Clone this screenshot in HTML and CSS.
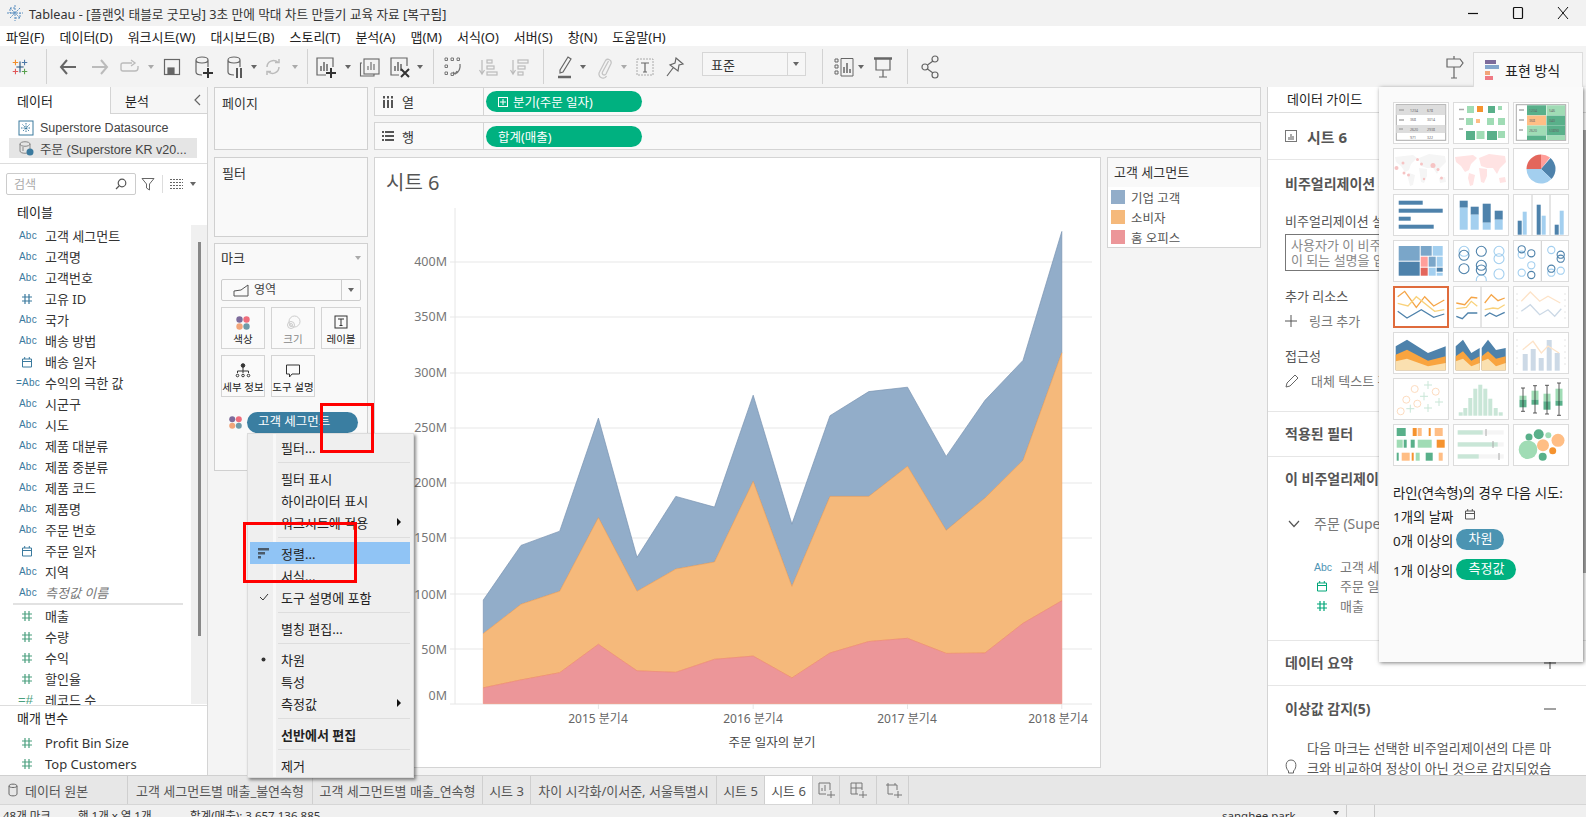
FILE: index.html
```html
<!DOCTYPE html>
<html lang="ko">
<head>
<meta charset="utf-8">
<title>Tableau</title>
<link rel="stylesheet" href="styles.css">
</head>
<body>
<svg class="defs" width="0" height="0">
  <defs>
    <symbol id="hash" viewBox="0 0 12 12"><path d="M4 1V11M8 1V11M1 4H11M1 8H11" fill="none" stroke="currentColor" stroke-width="1.2"/></symbol>
    <symbol id="cal" viewBox="0 0 12 12"><path d="M1.5 3H10.5V11H1.5ZM1.5 5.5H10.5M3.7 1V3M8.3 1V3" fill="none" stroke="currentColor" stroke-width="1"/></symbol>
    <symbol id="dots" viewBox="0 0 16 16"><circle cx="4.5" cy="4.5" r="3.2" fill="#7d6b9b"/><circle cx="11.5" cy="4.5" r="3.2" fill="#ef6d7c"/><circle cx="4.5" cy="11.5" r="3.2" fill="#f2a57a"/><circle cx="11.5" cy="11.5" r="3.2" fill="#6f9aa8"/></symbol>
    <symbol id="world" viewBox="0 0 56 42"><path d="M2 9L20 7L24 10L18 16L16 22L12 24L8 18L3 14ZM16 25L22 27L20 37L17 38L15 30ZM26 10L36 6L52 8L53 14L47 20L44 26L40 20L34 20L28 18ZM26 20L34 21L34 28L31 35L28 34L27 27ZM46 30L52 29L53 34L47 35Z"/></symbol>
  </defs>
</svg>

<header class="titlebar">
  <svg class="title-logo" width="16" height="16" viewBox="0 0 16 16"><path d="M8 0V16M0 8H16M3 3L13 13M13 3L3 13M8 3H3V8H8M8 13H13V8" stroke="#5b8fc0" stroke-width="1" stroke-dasharray="2 1" fill="none"/></svg>
  <span class="title-text">Tableau - [플랜잇 태블로 굿모닝] 3초 만에 막대 차트 만들기 교육 자료 [복구됨]</span>
  <span class="win-controls">
    <svg width="12" height="12" viewBox="0 0 12 12"><path d="M1 6.5H11" stroke="#111" stroke-width="1.2"/></svg>
    <svg width="12" height="14" viewBox="0 0 12 14"><rect x="1.5" y="1.5" width="9" height="11" rx="1" fill="none" stroke="#111" stroke-width="1.2"/></svg>
    <svg width="12" height="14" viewBox="0 0 12 14"><path d="M1 1L11 13M11 1L1 13" stroke="#111" stroke-width="1"/></svg>
  </span>
</header>

<nav class="menubar">
  <span>파일(F)</span><span>데이터(D)</span><span>워크시트(W)</span><span>대시보드(B)</span><span>스토리(T)</span><span>분석(A)</span><span>맵(M)</span><span>서식(O)</span><span>서버(S)</span><span>창(N)</span><span>도움말(H)</span>
</nav>

<div class="toolbar">
  <span class="tb w40"><svg width="20" height="20" viewBox="0 0 22 22" fill="none" stroke-width="1.2"><path d="M11 5V17M7 11H15" stroke="#1f4e79"/><path d="M6 3V9M3 6H9" stroke="#f28e2b"/><path d="M16 3V9M13 6H19" stroke="#4e79a7"/><path d="M6 13V19M3 16H9" stroke="#e15759"/><path d="M16 13V19M13 16H19" stroke="#59a14f"/></svg></span>
  <span class="tb w12"><i class="sep"></i></span>
  <span class="tb w32"><svg width="20" height="20" viewBox="0 0 20 20" fill="none" stroke="#666" stroke-width="2"><path d="M18 10H3M9 3L3 10L9 17"/></svg></span>
  <span class="tb w32"><svg width="20" height="20" viewBox="0 0 20 20" fill="none" stroke="#bbb" stroke-width="2"><path d="M2 10H17M11 3L17 10L11 17"/></svg></span>
  <span class="tb w28"><svg width="22" height="20" viewBox="0 0 22 20" fill="none" stroke="#bbb" stroke-width="1.4"><path d="M13 6H4Q2 6 2 8V12Q2 14 4 14H16Q19 14 19 11V9"/><path d="M12 3L16 6L12 9"/></svg></span>
  <span class="tb w14"><i class="dd dd-l"></i></span>
  <span class="tb w28"><svg width="18" height="20" viewBox="0 0 18 20" fill="none" stroke="#666" stroke-width="1.2"><rect x="1.5" y="2.5" width="15" height="15"/><rect x="5" y="11" width="6" height="6" fill="#666"/></svg></span>
  <span class="tb w36"><svg width="22" height="24" viewBox="0 0 22 24" fill="none" stroke="#666" stroke-width="1.2"><path d="M3 5C3 1 15 1 15 5V12M3 5C3 9 15 9 15 5M3 5V17C3 19 6 20 9 20"/><path d="M15 13V23M10 18H20" stroke="#333" stroke-width="2"/></svg></span>
  <span class="tb w26"><svg width="20" height="24" viewBox="0 0 20 24" fill="none" stroke="#666" stroke-width="1.2"><path d="M3 5C3 1 15 1 15 5V12M3 5C3 9 15 9 15 5M3 5V17C3 19 6 20 9 20"/><path d="M12 13V23M16 13V23" stroke="#333" stroke-width="1.6"/></svg></span>
  <span class="tb w12"><i class="dd"></i></span>
  <span class="tb w26"><svg width="20" height="20" viewBox="0 0 20 20" fill="none" stroke="#bbb" stroke-width="1.5"><path d="M4 10A6.5 6.5 0 0 1 15 5.5M16 10A6.5 6.5 0 0 1 5 14.5"/><path d="M12 5.5H16V2M8 14.5H4V18"/></svg></span>
  <span class="tb w18"><i class="dd dd-l"></i></span>
  <span class="tb w6"><i class="sep"></i></span>
  <span class="tb w32"><svg width="22" height="24" viewBox="0 0 22 24" fill="none" stroke="#666" stroke-width="1.2"><path d="M11 20H2V3H18V12"/><path d="M6 16V11M9 16V7M12 16V9" stroke-width="1.5"/><path d="M16 13V23M11 18H21" stroke="#333" stroke-width="2"/></svg></span>
  <span class="tb w12"><i class="dd"></i></span>
  <span class="tb w32"><svg width="22" height="22" viewBox="0 0 22 22" fill="none" stroke="#666" stroke-width="1.1"><path d="M3 7H1.5V20H15V18"/><rect x="5" y="3" width="15" height="15"/><path d="M9 14V10M12 14V6M15 14V8"/></svg></span>
  <span class="tb w28"><svg width="22" height="24" viewBox="0 0 22 24" fill="none" stroke="#666" stroke-width="1.2"><path d="M10 20H2V3H18V11"/><path d="M6 16V11M9 16V7M12 16V9" stroke-width="1.5"/><path d="M12 14L20 22M20 14L12 22" stroke="#333" stroke-width="2"/></svg></span>
  <span class="tb w12"><i class="dd"></i></span>
  <span class="tb w14"><i class="sep"></i></span>
  <span class="tb w26"><svg width="20" height="22" viewBox="0 0 20 22" fill="none" stroke="#777" stroke-width="1"><path d="M2 2h2.500v2.500h-2.500zM8 2h2.500v2.500h-2.500zM14 2h2.500v2.500h-2.500zM2 9h2.500v2.500h-2.500zM2 16h2.500v2.500h-2.500zM8 17h2.500v2.500h-2.500z"/><path d="M17 8Q18 15 12 18M10 16L12 18L14 15" stroke-width="1.3"/></svg></span>
  <span class="tb w44"><svg width="20" height="20" viewBox="0 0 20 20" fill="none" stroke="#bbb" stroke-width="1.2"><path d="M4 3V17M1.500 13L4 17L6.500 13"/><rect x="9" y="3" width="5" height="3"/><rect x="9" y="9" width="7" height="3"/><rect x="9" y="15" width="10" height="3"/></svg></span>
  <span class="tb w18"><svg width="20" height="20" viewBox="0 0 20 20" fill="none" stroke="#bbb" stroke-width="1.2"><path d="M4 3V17M1.500 13L4 17L6.500 13"/><rect x="9" y="3" width="10" height="3"/><rect x="9" y="9" width="7" height="3"/><rect x="9" y="15" width="5" height="3"/></svg></span>
  <span class="tb w30"><i class="sep"></i></span>
  <span class="tb w14"><svg width="18" height="24" viewBox="0 0 18 24" fill="none" stroke="#666" stroke-width="1.2"><path d="M4 15L12 2L15 4L7 17L4 18Z"/><path d="M2 22H15" stroke="#666" stroke-width="2.500"/></svg></span>
  <span class="tb w22"><i class="dd"></i></span>
  <span class="tb w22"><svg width="16" height="24" viewBox="0 0 16 24" fill="none" stroke="#c4c4c4" stroke-width="1.300"><path d="M11.500 6L5.500 17A2 2 0 0 0 9 19L14 8.500A3.200 3.200 0 0 0 8.500 5.500L2.500 17A4 4 0 0 0 9.500 21"/></svg></span>
  <span class="tb w16"><i class="dd dd-l"></i></span>
  <span class="tb w26"><svg width="18" height="18" viewBox="0 0 18 18" fill="none"><rect x="1" y="1" width="16" height="16" stroke="#aaa" stroke-dasharray="2 1"/><path d="M5 5H13M9 5V14M7 14H11" stroke="#666" stroke-width="1.200"/></svg></span>
  <span class="tb w34"><svg width="20" height="22" viewBox="0 0 20 22" fill="none" stroke="#666" stroke-width="1.2"><path d="M11 2L18 8L14 9L13 15L5 9L10 7ZM8 12L2 20"/></svg></span>
  <span class="tb w10"></span>
  <span class="combo"><span>표준</span><i class="combo-sep"></i><i class="dd combo-dd"></i></span>
  <span class="tb w32"><i class="sep"></i></span>
  <span class="tb w12"><svg class="over" width="20" height="22" viewBox="0 0 20 22" fill="none" stroke="#666" stroke-width="1"><path d="M1 3h3v3h-3zM1 9h3v3h-3zM1 15h3v3h-3z"/><path d="M7 2.500H19V20H7Z"/><path d="M10 17V11M13 17V7M16 17V13" stroke-width="1.500"/></svg></span>
  <span class="tb w22 dd-box"><i class="dd"></i></span>
  <span class="tb w22"><svg width="20" height="24" viewBox="0 0 20 24" fill="none" stroke="#666" stroke-width="1.2"><path d="M1 3.500H19" stroke-width="2.500"/><path d="M3 4V15H17V4M10 15V22M6 22H14"/></svg></span>
  <span class="tb w26"><i class="sep"></i></span>
  <span class="tb w20"><svg width="18" height="24" viewBox="0 0 18 24" fill="none" stroke="#666" stroke-width="1.2"><circle cx="14" cy="4" r="3"/><circle cx="4" cy="12" r="3"/><circle cx="14" cy="20" r="3"/><path d="M6.500 10L12 6M6.500 14L12 18"/></svg></span>
  <span class="tb-fill"></span>
  <span class="tb w20"><svg width="20" height="26" viewBox="0 0 20 26" fill="none" stroke="#666" stroke-width="1.2"><path d="M2 5H15L18 9L15 13H2ZM9 2V5M9 13V24M6 24H12"/></svg></span>
  <span class="tb w8"></span>
  <span class="showme-tab">
    <svg width="14" height="24" viewBox="0 0 14 24"><rect x="0" y="2" width="11" height="4" fill="#7d6b9b"/><rect x="0" y="7" width="14" height="4" fill="#84a6cc"/><rect x="0" y="13" width="5" height="4" fill="#f2a57a"/><rect x="0" y="18" width="8" height="4" fill="#ef7a85"/></svg>
    <span>표현 방식</span>
  </span>
</div>

<main class="main">
  <aside class="left">
    <div class="left-tabs">
      <span class="ltab on">데이터</span>
      <span class="ltab off">분석<svg class="collapse" width="8" height="12" viewBox="0 0 8 12"><path d="M7 1L2 6L7 11" fill="none" stroke="#666" stroke-width="1.200"/></svg></span>
    </div>
    <div class="sources">
      <div class="src"><svg width="16" height="16" viewBox="0 0 16 16" fill="none" stroke="#3b7a9e"><rect x="1" y="1" width="14" height="14"/><path d="M8 3V13M3 8H13M4.500 4.500L11.500 11.500M11.500 4.500L4.500 11.500" stroke-dasharray="1.500 1"/></svg><span>Superstore Datasource</span></div>
      <div class="src sel"><svg width="16" height="16" viewBox="0 0 16 16" fill="none" stroke="#888"><path d="M2 4C2 1 12 1 12 4V11C12 14 2 14 2 11ZM2 4C2 7 12 7 12 4M5 7V11"/><circle cx="12" cy="12" r="3.500" fill="#3b7a9e" stroke="none"/></svg><span>주문 (Superstore KR v20...</span></div>
    </div>
    <div class="searchrow">
      <span class="search"><span>검색</span><svg width="12" height="12" viewBox="0 0 12 12" fill="none" stroke="#555" stroke-width="1.200"><circle cx="7" cy="5" r="3.800"/><path d="M4 8L1 11"/></svg></span>
      <svg class="s-filter" width="14" height="14" viewBox="0 0 14 14" fill="none" stroke="#666"><path d="M1 1.500H13L8.500 7V13L5.500 11V7Z"/></svg>
      <i class="s-sep"></i>
      <svg width="13" height="12" viewBox="0 0 13 12" stroke="#666"><path d="M0 1.500H13M0 4.500H13M0 7.500H13M0 10.500H13" stroke-dasharray="2 1"/></svg>
      <i class="dd s-dd"></i>
    </div>
    <div class="group-title">테이블</div>
    <div class="fields">
      <div class="track"><i class="thumbbar"></i></div>
      <div class="f"><b>Abc</b><span>고객 세그먼트</span></div>
      <div class="f"><b>Abc</b><span>고객명</span></div>
      <div class="f"><b>Abc</b><span>고객번호</span></div>
      <div class="f"><svg class="blue" width="12" height="12"><use href="#hash"/></svg><span>고유 ID</span></div>
      <div class="f"><b>Abc</b><span>국가</span></div>
      <div class="f"><b>Abc</b><span>배송 방법</span></div>
      <div class="f"><svg class="blue" width="12" height="12"><use href="#cal"/></svg><span>배송 일자</span></div>
      <div class="f"><b class="calc">=Abc</b><span>수익의 극한 값</span></div>
      <div class="f"><b>Abc</b><span>시군구</span></div>
      <div class="f"><b>Abc</b><span>시도</span></div>
      <div class="f"><b>Abc</b><span>제품 대분류</span></div>
      <div class="f"><b>Abc</b><span>제품 중분류</span></div>
      <div class="f"><b>Abc</b><span>제품 코드</span></div>
      <div class="f"><b>Abc</b><span>제품명</span></div>
      <div class="f"><b>Abc</b><span>주문 번호</span></div>
      <div class="f"><svg class="blue" width="12" height="12"><use href="#cal"/></svg><span>주문 일자</span></div>
      <div class="f"><b>Abc</b><span>지역</span></div>
      <div class="f"><b>Abc</b><em>측정값 이름</em></div>
      <div class="f-div"></div>
      <div class="f"><svg class="green" width="12" height="12"><use href="#hash"/></svg><span>매출</span></div>
      <div class="f"><svg class="green" width="12" height="12"><use href="#hash"/></svg><span>수량</span></div>
      <div class="f"><svg class="green" width="12" height="12"><use href="#hash"/></svg><span>수익</span></div>
      <div class="f"><svg class="green" width="12" height="12"><use href="#hash"/></svg><span>할인율</span></div>
      <div class="f"><b class="calc green-t">=#</b><span>레코드 수</span></div>
    </div>
    <div class="params">
      <div class="group-title param-title">매개 변수</div>
      <div class="f"><svg class="green" width="12" height="12"><use href="#hash"/></svg><span>Profit Bin Size</span></div>
      <div class="f"><svg class="green" width="12" height="12"><use href="#hash"/></svg><span>Top Customers</span></div>
    </div>
  </aside>

  <section class="cards">
    <div class="card page-card">페이지</div>
    <div class="card filter-card">필터</div>
    <div class="card marks">
      <div class="marks-head"><span>마크</span><i class="dd dd-l"></i></div>
      <div class="mark-combo">
        <svg width="18" height="14" viewBox="0 0 18 14" fill="none" stroke="#555"><path d="M1 13V8L8 7L15 2V13Z"/></svg>
        <span>영역</span><i class="mc-sep"></i><i class="dd"></i>
      </div>
      <div class="mark-btns">
        <div class="mb"><svg width="16" height="16"><use href="#dots"/></svg><span>색상</span></div>
        <div class="mb dis"><svg width="16" height="16" viewBox="0 0 16 16" fill="none" stroke="#ccc"><circle cx="9.500" cy="6.500" r="5.500"/><circle cx="6" cy="10" r="3.500"/><circle cx="6" cy="10" r="1.500"/></svg><span>크기</span></div>
        <div class="mb"><svg width="14" height="14" viewBox="0 0 14 14" fill="none" stroke="#333"><rect x="1" y="1" width="12" height="12"/><path d="M4 4H10M7 4V10.500M5.500 10.500H8.500"/></svg><span>레이블</span></div>
        <div class="mb"><svg width="16" height="16" viewBox="0 0 16 16" fill="none" stroke="#333"><circle cx="8" cy="2.500" r="1.800" fill="#333"/><path d="M8 4V9M2.500 8V10M2.500 8H13.500V10M8 9V10"/><circle cx="2.500" cy="12.500" r="1.300"/><circle cx="8" cy="12.500" r="1.300"/><circle cx="13.500" cy="12.500" r="1.300"/></svg><span>세부 정보</span></div>
        <div class="mb"><svg width="16" height="16" viewBox="0 0 16 16" fill="none" stroke="#333"><path d="M1.500 2H14.500V11H7L4.500 14V11H1.500Z"/></svg><span>도구 설명</span></div>
      </div>
      <div class="mark-pill-row">
        <svg width="15" height="15"><use href="#dots"/></svg>
        <span class="mark-pill">고객 세그먼트</span>
      </div>
    </div>
  </section>

  <section class="work">
    <div class="shelf">
      <div class="shelf-label"><svg width="12" height="12" viewBox="0 0 12 12" stroke="#555" stroke-width="2"><path d="M2 4V12M6 4V12M10 4V12M2 0V2.500M6 0V2.500M10 0V2.500"/></svg><span>열</span></div>
      <span class="pill"><svg width="10" height="10" viewBox="0 0 10 10" fill="none" stroke="#fff"><rect x=".5" y=".5" width="9" height="9"/><path d="M5 2V8M2 5H8"/></svg>분기(주문 일자)</span>
    </div>
    <div class="shelf">
      <div class="shelf-label"><svg width="12" height="12" viewBox="0 0 12 12" stroke="#555" stroke-width="2"><path d="M0 2H2M3 2H12M0 6H2M3 6H12M0 10H2M3 10H12"/></svg><span>행</span></div>
      <span class="pill">합계(매출)</span>
    </div>
    <div class="canvas-row">
      <div class="viz">
        <div class="viz-title">시트 6</div>
        <svg class="chart" width="725" height="570" viewBox="375 197 725 570">
          <path class="grid" d="M450 262H1092M450 317H1092M450 373H1092M450 428H1092M450 483H1092M450 538H1092M450 594H1092M450 649H1092"/>
          <path class="axis" d="M455 208V704M450 704H1092M598.400 704V709M753.200 704V709M907.500 704V709M1061.800 704V709"/>
          <polygon class="a-blue" points="483.3,600 521,545.4 559.7,531.2 598.4,418.1 637,557.3 675.8,496.4 714.5,507.1 753.2,395.2 791.9,524.1 830,415.7 868.8,391.6 907.500,387.2 946.2,456.4 985,400.3 1023,360.4 1061.8,231.5 1061.8,352.8 1023,460.4 985,498 946.2,530.4 907.5,466.3 868.8,496.4 830,496.4 791.9,586.5 753.2,481.4 714.5,562 675.8,569.1 637,591.3 598.4,517.7 559.7,591.3 521,604.3 483.3,633.6"/>
          <polygon class="a-orange" points="483.3,633.6 521,604.3 559.7,591.3 598.4,517.7 637,591.3 675.8,569.1 714.5,562 753.2,481.4 791.9,586.5 830,496.4 868.8,496.4 907.5,466.3 946.2,530.4 985,498 1023,460.4 1061.8,352.8 1061.8,600.8 1023,623.3 985,653 946.2,653.4 907.5,638.3 868.8,641.5 830,653 791.9,677.9 753.2,656.1 714.5,659.3 675.8,672.3 637,670.8 598.4,644.3 559.7,672.7 521,679.9 483.3,687.8"/>
          <polygon class="a-red" points="483.3,687.8 521,679.9 559.7,672.7 598.4,644.3 637,670.8 675.8,672.3 714.5,659.3 753.2,656.1 791.9,677.9 830,653 868.8,641.5 907.5,638.3 946.2,653.4 985,653 1023,623.3 1061.8,600.8 1061.8,703.6 483.3,703.6"/>
          <g class="y-lab">
            <text x="447" y="266">400M</text><text x="447" y="321">350M</text><text x="447" y="377">300M</text><text x="447" y="432">250M</text><text x="447" y="487">200M</text><text x="447" y="542">150M</text><text x="447" y="599">100M</text><text x="447" y="654">50M</text><text x="447" y="700">0M</text>
          </g>
          <g class="x-lab">
            <text x="598" y="723">2015 분기4</text><text x="753" y="723">2016 분기4</text><text x="907" y="723">2017 분기4</text><text x="1058" y="723">2018 분기4</text>
            <text class="x-title" x="772" y="747">주문 일자의 분기</text>
          </g>
        </svg>
      </div>
      <div class="legend">
        <div class="legend-title">고객 세그먼트</div>
        <div class="leg"><i class="sw s1"></i>기업 고객</div>
        <div class="leg"><i class="sw s2"></i>소비자</div>
        <div class="leg"><i class="sw s3"></i>홈 오피스</div>
      </div>
    </div>
  </section>

  <aside class="guide">
    <div class="guide-tabs"><span>데이터 가이드</span></div>
    <div class="g-sheet"><svg width="12" height="12" viewBox="0 0 12 12"><rect x=".5" y=".5" width="11" height="11" fill="none" stroke="#777"/><path d="M3 10V7H5V4H7V6H9V10Z" fill="#aaa"/></svg><span>시트 6</span></div>
    <div class="g-sec g-viz">
      <h3>비주얼리제이션 세부 정보</h3>
      <div class="g-line l1">비주얼리제이션 설명</div>
      <div class="g-box">사용자가 이 비주얼리제이션을 이해하는 데 도움<br>이 되는 설명을 입력하세요</div>
      <div class="g-line l2">추가 리소스</div>
      <div class="g-line l3 g-act"><svg width="12" height="12" viewBox="0 0 12 12" stroke="#555"><path d="M6 0V12M0 6H12"/></svg><span>링크 추가</span></div>
      <div class="g-line l2">접근성</div>
      <div class="g-line l3 g-act"><svg width="14" height="14" viewBox="0 0 14 14" fill="none" stroke="#666"><path d="M1 13L2 9L10 1L13 4L5 12Z"/></svg><span>대체 텍스트 편집</span></div>
    </div>
    <div class="g-sec g-row"><h3>적용된 필터</h3></div>
    <div class="g-sec g-used">
      <h3>이 비주얼리제이션의 데이터</h3>
      <div class="g-line g-src"><svg width="12" height="8" viewBox="0 0 12 8" fill="none" stroke="#555" stroke-width="1.200"><path d="M1 1L6 6.500L11 1"/></svg><span>주문 (Superstore KR v2020)</span></div>
      <div class="g-line g-field g-first"><b>Abc</b><span>고객 세그먼트</span></div>
      <div class="g-line g-field"><svg class="teal" width="12" height="12"><use href="#cal"/></svg><span>주문 일자의 분기</span></div>
      <div class="g-line g-field"><svg class="teal" width="12" height="12"><use href="#hash"/></svg><span>매출</span></div>
    </div>
    <div class="g-sec g-row g-plus"><h3>데이터 요약</h3><svg width="12" height="12" viewBox="0 0 12 12" stroke="#444"><path d="M6 0V12M0 6H12"/></svg></div>
    <div class="g-sec g-out">
      <div class="g-out-head"><h3>이상값 감지(5)</h3><svg width="12" height="12" viewBox="0 0 12 12" stroke="#444"><path d="M0 6H12"/></svg></div>
      <div class="g-para">
        <svg width="14" height="18" viewBox="0 0 14 18" fill="none" stroke="#666"><path d="M4.500 12C1 9 1 1 7 1S13 9 9.500 12V14H4.500ZM5 16.500H9"/></svg>
        <p>다음 마크는 선택한 비주얼리제이션의 다른 마<br>크와 비교하여 정상이 아닌 것으로 감지되었습<br>니다.</p>
      </div>
    </div>
    <i class="guide-scroll"></i>
  </aside>
</main>

<footer class="tabs">
  <span class="tab ds"><svg width="10" height="14" viewBox="0 0 10 14" fill="none" stroke="#666"><path d="M1 3C1 0.500 9 0.500 9 3V11C9 13.500 1 13.500 1 11ZM1 3C1 5 9 5 9 3"/></svg>데이터 원본</span>
  <span class="tab">고객 세그먼트별 매출_불연속형</span>
  <span class="tab">고객 세그먼트별 매출_연속형</span>
  <span class="tab">시트 3</span>
  <span class="tab">차이 시각화/이서준, 서울특별시</span>
  <span class="tab">시트 5</span>
  <span class="tab cur">시트 6</span>
  <span class="tab"><svg width="18" height="18" viewBox="0 0 18 18" fill="none" stroke="#777"><path d="M9 13H2V2H13V9M5 10V7M8 10V4M14 10V17M10 14H18"/></svg></span>
  <span class="tab"><svg width="18" height="18" viewBox="0 0 18 18" fill="none" stroke="#777"><path d="M9 13H2V2H13V9M2 7H13M7 2V13M14 10V17M10 14H18"/></svg></span>
  <span class="tab"><svg width="18" height="18" viewBox="0 0 18 18" fill="none" stroke="#777"><path d="M9 13H4V4H2M11 4H13V9M4 2V4M11 2V4M4 4H11M14 10V17M10 14H18"/></svg></span>
</footer>
<div class="status">
  <span class="st a">48개 마크</span><span class="st b">행 1개 x 열 1개</span><span class="st c">합계(매출): 3,657,136,885</span>
  <span class="st-fill"></span>
  <span class="st user">sanghee.park</span><i class="dd st-dd"></i><i class="st-sep"></i><i class="st-sep wide"></i>
</div>

<!-- context menu -->
<div class="ctx">
  <div class="mi"><i></i><span>필터...</span></div>
  <hr>
  <div class="mi"><i></i><span>필터 표시</span></div>
  <div class="mi"><i></i><span>하이라이터 표시</span></div>
  <div class="mi"><i></i><span>워크시트에 적용</span><u></u></div>
  <hr>
  <div class="mi hot"><i><svg width="11" height="11" viewBox="0 0 11 11" fill="#4a5a6a"><rect width="11" height="2.500"/><rect y="4" width="7" height="2.500"/><rect y="8" width="3" height="2.500"/></svg></i><span>정렬...</span></div>
  <div class="mi"><i></i><span>서식...</span></div>
  <div class="mi"><i><svg width="10" height="8" viewBox="0 0 10 8" fill="none" stroke="#333"><path d="M1 4L4 7L9 1"/></svg></i><span>도구 설명에 포함</span></div>
  <hr>
  <div class="mi"><i></i><span>별칭 편집...</span></div>
  <hr>
  <div class="mi"><i><svg width="5" height="5"><circle cx="2.500" cy="2.500" r="2" fill="#333"/></svg></i><span>차원</span></div>
  <div class="mi"><i></i><span>특성</span></div>
  <div class="mi"><i></i><span>측정값</span><u></u></div>
  <hr>
  <div class="mi strong"><i></i><span>선반에서 편집</span></div>
  <hr>
  <div class="mi"><i></i><span>제거</span></div>
</div>

<i class="redbox r1"></i>
<i class="redbox r2"></i>

<!-- show me popup -->
<div class="showme">
  <div class="thumbs">
    <svg class="thumb" viewBox="0 0 56 42"><rect x="3.300" y="2.700" width="49.400" height="35.600" fill="#fff" stroke="#aaa"/><rect x="3.300" y="3" width="49" height="10" fill="#ddd"/><rect x="3.300" y="23" width="49" height="8" fill="#ddd"/><path d="M6 8H11M6 18H11M6 27H10" stroke="#aaa" stroke-width="1.500"/><g class="tiny"><text x="17" y="9.500">1234</text><text x="34" y="9.500">678</text><text x="17" y="19">368</text><text x="34" y="19">3014</text><text x="17" y="28.500">2620</text><text x="34" y="28.500">2938</text><text x="17" y="36.500">971</text><text x="34" y="36.500">322</text></g></svg>

    <svg class="thumb" viewBox="0 0 56 42"><path d="M6 7.500H11M6 17H11M6 27H10" stroke="#aaa" stroke-width="1.500"/><rect class="lg" x="14" y="4" width="7" height="7"/><rect class="or" x="24" y="4" width="6" height="6"/><rect class="dg" x="35" y="4" width="7" height="7"/><rect class="lg" x="45" y="4" width="4" height="4"/><rect class="lg" x="13" y="16" width="7" height="7"/><rect class="pe" x="23" y="17" width="4" height="4"/><rect class="lg" x="34" y="16" width="7" height="7"/><rect class="lg" x="45" y="16" width="7" height="7"/><rect class="dg" x="13" y="29" width="9" height="9"/><rect class="lg" x="23.500" y="29" width="8" height="8"/><rect class="dg" x="34" y="29" width="10" height="9"/><rect class="lg" x="45" y="29" width="7" height="7"/></svg>

    <svg class="thumb" viewBox="0 0 56 42"><rect x="3.300" y="2.700" width="49.400" height="35.600" fill="#fff" stroke="#aaa"/><path d="M6 8H11M6 18H11M6 28H10" stroke="#aaa" stroke-width="1.500"/><rect class="dg" x="14" y="3.300" width="19" height="10"/><rect class="lg" x="33.500" y="3.300" width="18.500" height="10"/><rect class="pe" x="14" y="13.500" width="19" height="10"/><rect class="dg" x="33.500" y="13.500" width="18.500" height="10"/><rect class="lg" x="14" y="23.500" width="19" height="10"/><rect class="dg" x="33.500" y="23.500" width="18.500" height="10"/><rect class="dg" x="14" y="33.500" width="19" height="4.500"/><rect class="lg" x="33.500" y="33.500" width="18.500" height="4.500"/><g class="tiny"><text x="16" y="10">1234</text><text x="36" y="10">546</text><text x="16" y="20">368</text><text x="36" y="20">340</text><text x="16" y="30">2620</text><text x="36" y="30">53890</text></g></svg>

    <svg class="thumb map-grey" viewBox="0 0 56 42"><use href="#world"/><g class="pk-dot"><circle cx="3.500" cy="20" r="2"/><circle cx="10" cy="15" r="1.500"/><circle cx="24.500" cy="11.500" r="1.500"/><circle cx="28.500" cy="16" r="1.500"/><circle cx="40" cy="17.500" r="2.500"/><circle cx="45" cy="21.500" r="1.500"/><circle cx="48.500" cy="30" r="1.500"/><circle cx="15.500" cy="27" r="1.500"/><circle cx="11" cy="25" r="1.500"/><circle cx="31" cy="31" r="1.200"/></g></svg>

    <svg class="thumb map-pink" viewBox="0 0 56 42"><use href="#world"/></svg>

    <svg class="thumb" viewBox="0 0 56 42"><path class="pk" d="M28 21L28 6.500A14.500 14.500 0 0 1 37 9.500Z"/><path class="bl" d="M28 21L37.500 10A14.500 14.500 0 0 1 38.500 31Z"/><path class="lb" d="M28 21L38.500 31A14.500 14.500 0 0 1 13.500 21Z"/><path class="rd" d="M28 21L13.500 21A14.500 14.500 0 0 1 28 6.500Z"/></svg>

    <svg class="thumb" viewBox="0 0 56 42"><g class="bl"><rect x="5.700" y="6.700" width="24" height="4"/><rect x="5.700" y="14.700" width="44" height="4"/><rect x="5.700" y="22.700" width="12" height="4"/><rect x="5.700" y="30.700" width="35" height="4"/></g></svg>

    <svg class="thumb" viewBox="0 0 56 42"><rect class="bl" x="6.700" y="6.700" width="8" height="7"/><rect class="lb" x="6.700" y="13.700" width="8" height="22"/><rect class="bl" x="17.700" y="12.700" width="8" height="8"/><rect class="lb" x="17.700" y="20.700" width="8" height="15"/><rect class="bl" x="29.700" y="9.700" width="8" height="19"/><rect class="lb" x="29.700" y="28.700" width="8" height="7"/><rect class="bl" x="41.700" y="16.700" width="8" height="9"/><rect class="lb" x="41.700" y="25.700" width="8" height="10"/></svg>

    <svg class="thumb" viewBox="0 0 56 42"><path d="M19 0V42M37 0V42" stroke="#ccc"/><rect class="bl" x="4.700" y="26.700" width="4" height="14"/><rect class="lb" x="9.700" y="17.700" width="4" height="23"/><rect class="bl" x="23.700" y="10.700" width="4" height="30"/><rect class="lb" x="28.700" y="21.700" width="4" height="19"/><rect class="bl" x="41.700" y="30.700" width="4" height="10"/><rect class="lb" x="46.700" y="16.700" width="4" height="24"/></svg>

    <svg class="thumb" viewBox="0 0 56 42"><rect class="md" x="5.700" y="6" width="21" height="14.700"/><rect class="bl" x="5.700" y="21.700" width="21" height="14"/><rect class="md" x="27.700" y="6" width="11" height="9.700"/><rect class="lb" x="39.700" y="6" width="10" height="9.700"/><rect class="pk" x="27.700" y="16.700" width="7" height="10"/><rect class="rd" x="27.700" y="27.700" width="7" height="8"/><rect class="md" x="35.700" y="16.700" width="7" height="10"/><rect class="lb" x="43.700" y="16.700" width="6" height="10"/><rect class="lb" x="35.700" y="27.700" width="7" height="8"/><rect class="bl" x="43.700" y="27.700" width="6" height="4"/><rect class="lb" x="43.700" y="32.700" width="6" height="3"/></svg>

    <svg class="thumb" viewBox="0 0 56 42"><g class="o-l"><circle cx="11" cy="11.300" r="5"/><circle cx="46" cy="11.300" r="5"/><circle cx="46" cy="18.700" r="5"/><circle cx="46" cy="34" r="5"/><circle cx="28.300" cy="40" r="5"/></g><g class="o-d"><circle cx="11" cy="15.300" r="5"/><circle cx="28.300" cy="11.300" r="5"/><circle cx="11" cy="28.700" r="5"/><circle cx="28.300" cy="25.300" r="5"/><circle cx="28.300" cy="30" r="5"/></g></svg>

    <svg class="thumb" viewBox="0 0 56 42"><path d="M28.300 0V42" stroke="#ccc"/><g class="o-l"><circle cx="8.700" cy="14.700" r="3.600"/><circle cx="18.300" cy="25.300" r="3.600"/><circle cx="8.700" cy="32.700" r="3.600"/><circle cx="38.300" cy="10" r="3.600"/><circle cx="38.300" cy="32.700" r="3.600"/><circle cx="47.700" cy="30.700" r="3.600"/></g><g class="o-d"><circle cx="8.700" cy="9.300" r="3.600"/><circle cx="18.300" cy="13.300" r="3.600"/><circle cx="18.300" cy="35" r="3.600"/><circle cx="47.700" cy="14.700" r="3.600"/><circle cx="47.700" cy="18.700" r="3.600"/><circle cx="38.300" cy="28.700" r="3.600"/></g></svg>

    <svg class="thumb on" viewBox="0 0 56 42"><polyline class="ln ln-o" points="4.700,10.700 11.700,5.300 23.300,21.300 31.700,10.700 40.700,20 51.300,14"/><polyline class="ln ln-y" points="4.700,17.300 15,20 23.300,10.700 41.700,25.300 51.300,23.700"/><polyline class="ln ln-b" points="4.700,25.300 14,32 28.300,23.700 40.700,31.300 51.300,28"/></svg>

    <svg class="thumb" viewBox="0 0 56 42"><path d="M28 0V42" stroke="#ccc"/><polyline class="ln ln-o" points="3.300,17 11.700,18.700 18.300,11.300 24.300,12"/><polyline class="ln ln-y" points="3.300,22.700 13.300,21.300 18.300,15.300 24.300,20.300"/><polyline class="ln ln-b" points="3.300,30.300 9.300,32.700 15,27 24.300,27"/><polyline class="ln ln-o" points="31.700,17 38.300,8.700 45,14.700 51.700,12"/><polyline class="ln ln-y" points="31.700,23.700 40,22 45,22.700 51.700,18.700"/><polyline class="ln ln-b" points="31.700,30.300 36.700,27 43.300,30.300 51.700,26.300"/></svg>

    <svg class="thumb" viewBox="0 0 56 42"><polyline class="ln ln-fp" points="8.300,15.300 17.300,6 26.700,15.300 35,10.300 47.300,17"/><polyline class="ln ln-fb" points="8.300,25.300 17.300,18.700 26.700,28.700 35,23.700 41.700,30.300 48.300,22.700"/><path d="M3 8H5M3 14H5M3 20H5M3 26H5M3 32H5M51 8H53M51 14H53M51 20H53M51 26H53M51 32H53" stroke="#e6e6e6"/></svg>

    <svg class="thumb" viewBox="0 0 56 42"><polygon class="bl" points="2.700,14.300 14,7.700 35,21 52.700,14.300 52.700,38.300 2.700,38.300"/><polygon class="ao" points="2.700,22.700 14,17.700 35,28.700 52.700,24.300 52.700,38.300 2.700,38.300"/><polygon class="ay" points="2.700,29.300 14,26.700 35,34.300 52.700,31 52.700,38.300 2.700,38.300"/></svg>

    <svg class="thumb" viewBox="0 0 56 42"><polygon class="bl" points="2.700,14.300 10,7.700 18.300,21 26.700,16 26.700,38.300 2.700,38.300"/><polygon class="ao" points="2.700,24.300 10,19.300 18.300,28.700 26.700,24.300 26.700,38.300 2.700,38.300"/><polygon class="ay" points="2.700,29.300 10,26.700 18.300,34.300 26.700,31 26.700,38.300 2.700,38.300"/><polygon class="bl" points="28.700,16 35,7.700 43,18 52.700,16 52.700,38.300 28.700,38.300"/><polygon class="ao" points="28.700,24.300 35,19.300 43,26.700 52.700,24.300 52.700,38.300 28.700,38.300"/><polygon class="ay" points="28.700,29.300 35,26.700 43,34.300 52.700,31 52.700,38.300 28.700,38.300"/></svg>

    <svg class="thumb" viewBox="0 0 56 42"><g class="fb"><rect x="9.700" y="22" width="5" height="16.700"/><rect x="17.700" y="17" width="5" height="21.700"/><rect x="25.700" y="26" width="5" height="12.700"/><rect x="33.700" y="8" width="5" height="30.700"/><rect x="41.700" y="21" width="5" height="17.700"/></g><polyline class="ln ln-fp" points="9.700,17.700 20,9.300 28.300,21 35,14 46,21"/><path d="M3 8H5M3 14H5M3 20H5M3 26H5M3 32H5M51 8H53M51 14H53M51 20H53M51 26H53M51 32H53" stroke="#e6e6e6"/></svg>

    <svg class="thumb" viewBox="0 0 56 42"><g class="o-pe"><circle cx="21.700" cy="11" r="3.500"/><circle cx="42.700" cy="13.700" r="3.500"/><circle cx="13.300" cy="21.700" r="3.500"/><circle cx="24.300" cy="25.700" r="3.500"/><circle cx="7.700" cy="33.300" r="3.500"/></g><path d="M35 3V11M31 7H39M31 14.300V22.300M27 18.300H35M46 20V28M42 24H50M35 26V34M31 30H39M17.300 26.700V34.700M13.300 30.700H21.300" stroke="#c9e6d7" fill="none"/></svg>

    <svg class="thumb" viewBox="0 0 56 42"><g class="pg"><rect x="5.700" y="34.300" width="4" height="3.400"/><rect x="10.300" y="30" width="4" height="7.700"/><rect x="15.300" y="20" width="4" height="17.700"/><rect x="20.300" y="10.700" width="4" height="27"/><rect x="25.300" y="6.700" width="4" height="31"/><rect x="30.300" y="10.700" width="4" height="27"/><rect x="35.300" y="20.700" width="4" height="17"/><rect x="40.700" y="30" width="4" height="7.700"/><rect x="45.700" y="34.300" width="4" height="3.400"/></g></svg>

    <svg class="thumb" viewBox="0 0 56 42"><rect class="lg" x="6.500" y="17.700" width="7" height="4"/><rect class="dg" x="6.500" y="21.700" width="7" height="7.600"/><rect class="lg" x="18.500" y="12.700" width="7" height="9"/><rect class="dg" x="18.500" y="21.700" width="7" height="5"/><rect class="lg" x="30.500" y="15.700" width="7" height="7.600"/><rect class="dg" x="30.500" y="23.300" width="7" height="8.400"/><rect class="lg" x="42.500" y="10.700" width="7" height="12"/><rect class="dg" x="42.500" y="22.700" width="7" height="5"/><path d="M10 10V33.300M8 10H12M8 33.300H12M22 7.700V35M20 7.700H24M20 35H24M34 7.300V36M32 7.300H36M32 36H36M46 5V37.300M44 5H48M44 37.300H48" stroke="#333" stroke-width=".8" fill="none"/></svg>

    <svg class="thumb" viewBox="0 0 56 42"><rect class="dg" x="3.700" y="4" width="9" height="8"/><rect class="or" x="19.700" y="4" width="4" height="8"/><rect class="pe" x="24.700" y="4" width="4" height="8"/><rect class="or" x="35.700" y="4" width="2" height="8"/><rect class="pe" x="41.700" y="4" width="8" height="8"/><rect class="lg" x="3.700" y="15.700" width="6" height="8"/><rect class="dg" x="10.700" y="15.700" width="3" height="8"/><rect class="dg" x="17.700" y="15.700" width="4" height="8"/><rect class="lg" x="24.700" y="15.700" width="14" height="8"/><rect class="or" x="43.700" y="15.700" width="8" height="8"/><rect class="dg" x="3.700" y="28.700" width="2" height="8"/><rect class="pe" x="8.700" y="28.700" width="8" height="8"/><rect class="or" x="18.700" y="28.700" width="2" height="8"/><rect class="lg" x="22.700" y="28.700" width="4" height="8"/><rect class="dg" x="32.700" y="28.700" width="7" height="8"/><rect class="pe" x="45.700" y="28.700" width="4" height="8"/></svg>

    <svg class="thumb" viewBox="0 0 56 42"><rect x="4.700" y="6.300" width="46" height="4.300" fill="#f5f5f5"/><rect x="4.700" y="18.300" width="46" height="4.300" fill="#f5f5f5"/><rect x="4.700" y="30.300" width="46" height="4.300" fill="#f5f5f5"/><rect class="pg" x="4.700" y="6.300" width="25" height="4.300"/><rect class="pg" x="4.700" y="18.300" width="40" height="4.300"/><rect class="pg" x="4.700" y="30.300" width="21" height="4.300"/><path d="M33 5V12M40 17V24M46 29V36" stroke="#aaa"/></svg>

    <svg class="thumb" viewBox="0 0 56 42"><circle class="lg" cx="15" cy="25.700" r="9.300"/><circle class="pe" cx="30" cy="21.300" r="6"/><circle class="pe" cx="45" cy="16.300" r="6.500"/><circle class="dg" cx="25.700" cy="10.300" r="5"/><circle class="dg" cx="16" cy="13" r="3.500"/><circle class="lg" cx="35.300" cy="11.300" r="3"/><circle class="or" cx="39.700" cy="26.700" r="3.500"/><circle class="dg" cx="29.700" cy="32.700" r="4"/></svg>
  </div>
  <div class="hint">
    <div class="h1">라인(연속형)의 경우 다음 시도:</div>
    <div class="h2">1개의 날짜<svg width="12" height="12"><use href="#cal"/></svg></div>
    <div class="h3">0개 이상의<span class="hp dim">차원</span></div>
    <div class="h4">1개 이상의<span class="hp mea">측정값</span></div>
  </div>
</div>
</body>
</html>
```
FILE: styles.css
```css
*{box-sizing:border-box}
html,body{margin:0;padding:0;height:817px;overflow:hidden}
body{font-family:"Noto Sans","Noto Sans CJK KR",sans-serif;font-size:13px;color:#333;background:#f3f3f3;display:flex;flex-direction:column;width:1586px;position:relative}
.defs{position:absolute}
i{display:block;font-style:normal}

.titlebar{height:26px;flex:none;background:#f2f2f2;display:flex;align-items:center;padding-left:7px;font-size:12.700px;color:#333}
.title-text{margin-left:6px;white-space:nowrap}
.title-logo{flex:none}
.win-controls{margin-left:auto;display:flex;align-items:center;gap:33px;padding-right:17px}
.menubar{height:20px;flex:none;background:#fff;display:flex;align-items:center;gap:15px;padding-left:6px;font-size:13px;color:#222;white-space:nowrap}

.toolbar{height:41px;flex:none;background:#f3f3f3;display:flex;align-items:stretch}
.tb{flex:none;display:flex;align-items:center;justify-content:center;height:41px}
.tb svg{flex:none}
.tb-fill{flex:1}
.w6{width:6px}.w8{width:8px}.w10{width:10px}.w12{width:12px}.w14{width:14px}.w16{width:16px}.w18{width:18px}.w20{width:20px}.w22{width:22px}.w26{width:26px}.w28{width:28px}.w30{width:30px}.w32{width:32px}.w34{width:34px}.w36{width:36px}.w40{width:40px}.w44{width:44px}
.sep{width:1px;height:35px;background:#d2d2d2}
.dd{width:0;height:0;border-left:3.500px solid transparent;border-right:3.500px solid transparent;border-top:4px solid #666;flex:none}
.dd-l{border-top-color:#aaa}
.combo{width:104px;height:24px;margin-top:6px;flex:none;background:#f6f6f6;border:1px solid #d6d6d6;display:flex;align-items:center;padding:0 6px 0 8px;font-size:13px;color:#333}
.combo span{flex:1}
.combo-sep{width:1px;height:22px;background:#d6d6d6;margin-right:5px}
.showme-tab{width:110px;height:35px;margin:6px 3px 0 0;flex:none;background:#f9f9f9;border:1px solid #dcdcdc;border-bottom:0;display:flex;align-items:center;gap:6px;padding-left:11px;font-size:14px;color:#222;position:relative;z-index:3}

.main{height:688px;flex:none;display:flex;align-items:stretch;background:#f4f4f4}

.left{width:208px;flex:none;background:#fff;border-right:1px solid #d4d4d4;display:flex;flex-direction:column}
.left-tabs{height:27px;display:flex;flex:none}
.ltab{height:27px;display:flex;align-items:center;font-size:13px;color:#222}
.ltab.on{width:110px;padding-left:17px}
.ltab.off{flex:1;padding-left:14px;background:#f6f6f6;border-left:1px solid #d4d4d4;border-bottom:1px solid #d4d4d4;justify-content:space-between;padding-right:6px}
.sources{height:50px;padding-top:4px;border-bottom:1px solid #ddd;flex:none}
.src{height:20px;display:flex;align-items:center;gap:6px;margin:0 10px 0 9px;padding-left:9px;font-family:"Liberation Sans","Noto Sans CJK KR",sans-serif;font-size:12.500px;color:#444;white-space:nowrap;overflow:hidden}
.src svg{flex:none}
.src.sel{background:#e5e5e5}
.searchrow{height:22px;margin-top:9px;flex:none;display:flex;align-items:center;padding-left:6px}
.search{width:130px;height:22px;border:1px solid #ccc;border-radius:2px;display:flex;align-items:center;justify-content:space-between;padding:0 8px 0 7px;color:#aaa;font-size:12px}
.s-filter{margin-left:5px}
.s-sep{width:1px;height:18px;background:#ddd;margin:0 7px}
.s-dd{margin-left:7px}
.group-title{height:21px;margin:7px 0 2px;flex:none;line-height:21px;padding-left:17px;font-size:13px;color:#222}
.fields{height:480px;flex:none;overflow:hidden;position:relative;border-bottom:0}
.track{position:absolute;right:0;top:0;width:16px;height:479px;background:#f0f0f0}
.thumbbar{width:3px;height:394px;background:#888;margin:17px 0 0 7px}
.f{height:21px;display:flex;align-items:center;white-space:nowrap;font-size:13px;color:#333}
.f>b,.f>svg{width:12px;flex:none;margin-left:21px;margin-right:12px}
.f>b{font:normal 10px/21px "Liberation Sans",sans-serif;color:#3b7a9e;width:22px;margin-left:19px;margin-right:4px;letter-spacing:.2px}
.f>b.calc{margin-left:16px;width:25px;margin-right:4px}
.f>b.green-t{color:#4a9f7e;font-size:13px;margin-left:18px;width:23px}
.f em{color:#777;font-style:italic}
.blue{color:#3b7a9e}
.green{color:#4a9f7e}
.f-div{height:2px;background:#e2e2e2;margin:0 24px 0 13px}
.params{border-top:1px solid #ddd;flex:1;padding-top:2px}
.param-title{margin:0 0 2px;height:22px}

.cards{width:154px;margin-left:6px;flex:none;display:flex;flex-direction:column}
.card{background:#f9f9f9;border:1px solid #d0d0d0;padding:5px 7px;line-height:20px;font-size:13px;color:#333}
.page-card{height:63px}
.filter-card{height:80px;margin-top:7px}
.marks{height:228px;margin-top:6px;padding:4px 6px 0;position:relative}
.marks-head{display:flex;justify-content:space-between;align-items:center;height:20px}
.mark-combo{height:22px;margin-top:11px;width:140px;background:#fafafa;border:1px solid #ccc;border-radius:2px;display:flex;align-items:center;padding-left:11px;font-size:12px;color:#444}
.mark-combo span{margin-left:3px;flex:1}
.mc-sep{width:1px;height:20px;background:#ccc;margin-right:6px}
.mark-combo .dd{margin-right:6px}
.mark-btns{display:grid;grid-template-columns:44px 44px 40px;gap:6px;margin-top:6px}
.mb{height:42px;background:#fafafa;border:1px solid #d4d4d4;display:flex;flex-direction:column;align-items:center;justify-content:space-between;padding:7px 0 2px;font-size:10.500px;line-height:13px;color:#222;white-space:nowrap}
.mb.dis{color:#888}
.mark-pill-row{display:flex;align-items:center;margin-top:15px;gap:4px;padding-left:7px}
.mark-pill{width:111px;height:21px;border-radius:11px;background:#3a7ea1;color:#fff;font-size:12.500px;line-height:20px;padding-left:11px;white-space:nowrap}

.work{width:887px;margin-left:6px;flex:none;display:flex;flex-direction:column}
.shelf{height:29px;background:#f9f9f9;border:1px solid #d4d4d4;display:flex;align-items:center;flex:none}
.shelf+.shelf{height:28px;margin-top:6px}
.shelf-label{width:109px;height:100%;border-right:1px solid #d4d4d4;display:flex;align-items:center;gap:8px;padding-left:7px;font-size:13px;color:#333}
.pill{width:156px;height:21px;margin-left:2px;border-radius:11px;background:#00b180;color:#fff;font-size:12.500px;display:flex;align-items:center;gap:5px;padding-left:12px;white-space:nowrap}
.canvas-row{display:flex;gap:6px;margin-top:7px;height:611px;flex:none;align-items:flex-start}
.viz{width:727px;height:611px;background:#fff;border:1px solid #d4d4d4;flex:none;overflow:hidden}
.viz-title{height:39px;padding:12px 0 0 11px;font-size:20px;line-height:26px;color:#555}
.chart{display:block}
.grid{stroke:#f0f0f0;stroke-width:1.500;fill:none}
.axis{stroke:#e6e6e6;fill:none}
.a-blue{fill:#92adc9;stroke:#7a94b1;stroke-width:.7}
.a-orange{fill:#f5b97b;stroke:#f0a35c;stroke-width:.7}
.a-red{fill:#ec9699;stroke:#ee8a78;stroke-width:.7}
.y-lab text{font-size:12.500px;fill:#777;text-anchor:end}
.x-lab text{font-size:12px;fill:#666;text-anchor:middle}
.x-lab .x-title{fill:#444;font-size:12.500px}
.legend{width:154px;height:91px;background:#fff;border:1px solid #d4d4d4;flex:none}
.legend-title{height:29px;background:#f9f9f9;line-height:28px;padding-left:6px;font-size:13px;color:#333}
.leg{height:20px;display:flex;align-items:center;gap:6px;padding-left:3px;font-size:12.500px;color:#555}
.sw{width:14px;height:14px;flex:none}
.s1{background:#92adc9}.s2{background:#f5b97b}.s3{background:#ec9699}

.guide{flex:1;margin-left:6px;background:#fff;border-left:1px solid #d4d4d4;position:relative;overflow:hidden}
.guide-tabs{height:26px;border-bottom:1px solid #ddd;line-height:25px;padding-left:19px;color:#222;font-size:13px;background:#fff}
.guide-tabs span{display:block;width:110px}
.g-sheet{height:47px;border-bottom:1px solid #e6e6e6;display:flex;align-items:center;gap:10px;padding-left:17px;font-size:15px;font-weight:700;color:#555}
.g-sec{border-bottom:1px solid #e6e6e6;padding-left:17px;white-space:nowrap}
.g-sec h3{margin:0;font-size:14px;line-height:20px;font-weight:700;color:#555}
.g-line{height:20px;line-height:20px;color:#555;font-size:13px}
.g-viz{height:252px;padding-top:14px}
.l1{margin-top:17px}
.l2{margin-top:15px}
.l3{margin-top:5px}
.g-box{height:37px;width:320px;margin-top:3px;border:1px solid #777;padding:3px 5px;line-height:15px;font-size:13px;color:#888}
.g-act{display:flex;align-items:center;gap:12px;color:#777}
.g-row{height:45px;display:flex;align-items:center}
.g-plus{justify-content:space-between;padding-right:30px}
.g-used{height:184px;padding-top:12px}
.g-src{display:flex;align-items:center;gap:14px;margin-top:25px;padding-left:3px;color:#777;font-size:14px}
.g-src span{width:66px;overflow:hidden}
.g-field{display:flex;align-items:center;padding-left:29px;color:#777;height:19.500px}
.g-first{margin-top:23px}
.g-field b{font:normal 10.500px "Liberation Sans",sans-serif;color:#4e94b4;width:26px}
.g-field svg{margin:0 12px 0 2px}
.g-field span{width:40px;overflow:hidden}
.teal{color:#00a678}
.g-out{padding-top:13px;border-bottom:0;padding-right:30px}
.g-out-head{display:flex;justify-content:space-between;align-items:center}
.g-para{display:flex;align-items:center;gap:9px;margin-top:19px;margin-left:-1px}
.g-para p{margin:0;line-height:20px;color:#555;font-size:13px}
.guide-scroll{position:absolute;right:0;top:43px;width:3px;height:443px;background:#aaa}

.tabs{height:30px;flex:none;background:#e7e7e7;border-top:1px solid #d0d0d0;border-bottom:1px solid #d6d6d6;display:grid;grid-template-columns:128px 185px 170px 48px 186px 48px 48px 27px 37px 32px;justify-content:start}
.tab{display:flex;align-items:center;justify-content:center;gap:5px;border-right:1px solid #cfcfcf;font-size:13px;color:#555;white-space:nowrap;overflow:hidden}
.tab.ds{justify-content:flex-start;gap:7px;padding-left:8px}
.tab.cur{background:#fff}
.status{height:12px;flex:none;background:#f0f0f0;display:flex;align-items:center;font-size:11.500px;line-height:22px;color:#333;overflow:hidden}
.st{height:12px;display:block;white-space:nowrap}
.a{margin-left:3px;width:75px}
.b{width:112px}
.st-fill{flex:1}
.user{width:111px}
.st-dd{margin-top:4px;border-top-color:#222;margin-right:7px}
.st-sep{width:1px;height:12px;background:#ccc;margin-right:27px}
.st-sep.wide{margin-right:211px}

.ctx{position:absolute;left:247px;top:433px;width:167px;height:345px;padding:2px 3px 2px 2px;border:1px solid #dcdcdc;background:linear-gradient(90deg,#efefef 0 25px,#f8f8f8 25px 28px,#efefef 28px);box-shadow:2px 2px 3px rgba(0,0,0,.45);z-index:5}
.ctx hr{height:9px;margin:0 0 0 28px;border:0;background:linear-gradient(#ddd,#ddd) center/100% 1px no-repeat}
.mi{height:22px;display:grid;grid-template-columns:25px 6px 1fr 13px;align-items:center;font-size:13px;color:#222;white-space:nowrap}
.mi i{grid-column:1;display:flex;justify-content:center;align-items:center;padding-left:2px}
.mi span{grid-column:3}
.mi u{grid-column:4;width:0;height:0;border-top:4px solid transparent;border-bottom:4px solid transparent;border-left:4px solid #111;text-decoration:none}
.mi.hot{background:#90c4f5}
.mi.strong{font-weight:700}

.redbox{position:absolute;border:3px solid #f00;z-index:6}
.r1{left:320px;top:403px;width:54px;height:50px}
.r2{left:243px;top:522px;width:114px;height:61px}

.showme{position:absolute;left:1379px;top:87px;width:204px;height:575px;background:#fafafa;box-shadow:1px 1px 4px rgba(0,0,0,.5);padding:15px 0 0 14px;z-index:2}
.thumbs{display:grid;grid-template-columns:repeat(3,56px);grid-auto-rows:42px;gap:4px}
.thumb{width:56px;height:42px;display:block;background:#fff;outline:1px solid #dcdcdc;outline-offset:-1px}
.thumb.on{outline:2px solid #df6b3c;outline-offset:-2px}
.tiny text{font-size:3.500px;fill:#666}
.dg{fill:#59b08a}.lg{fill:#a0dcb5}.or{fill:#f5932f}.pe{fill:#ffbe85}.bl{fill:#4e82ab}.lb{fill:#a3cfef}.md{fill:#7aa6c9}.rd{fill:#e3665c}.pk{fill:#ff9f9b}
.ao{fill:#f9a43f}.ay{fill:#fae0b0}.fb{fill:#ccd9e6}.pg{fill:#c9e6d7}
.map-grey use{fill:#f5f5f5}
.map-pink use{fill:#ffe3e3}
.pk-dot circle{fill:#f6c4c4}
.o-l circle{fill:none;stroke:#a3cfef;stroke-width:1.100}
.o-d circle{fill:none;stroke:#4e82ab;stroke-width:1.100}
.o-pe circle{fill:none;stroke:#fddcc0;stroke-width:1}
.ln{fill:none;stroke-width:1.300}
.ln-o{stroke:#f5a547}.ln-y{stroke:#f9d27c}.ln-b{stroke:#4e82ab}.ln-fp{stroke:#fde3c8}.ln-fb{stroke:#ccd9e6}
.hint{margin-top:15px;font-size:13.400px;color:#222;white-space:nowrap}
.hint>div{display:flex;align-items:center;height:21px}
.h1{margin-bottom:3px}
.h2{gap:11px}
.h2 svg{color:#555;margin-bottom:4px}
.h3{margin-top:3px}
.h4{margin-top:9px}
.hp{height:21px;border-radius:11px;color:#fff;font-size:13px;line-height:19px;text-align:center;margin-left:3px}
.dim{width:48px;background:#4b94b2}
.mea{width:60px;background:#00b180}
```
